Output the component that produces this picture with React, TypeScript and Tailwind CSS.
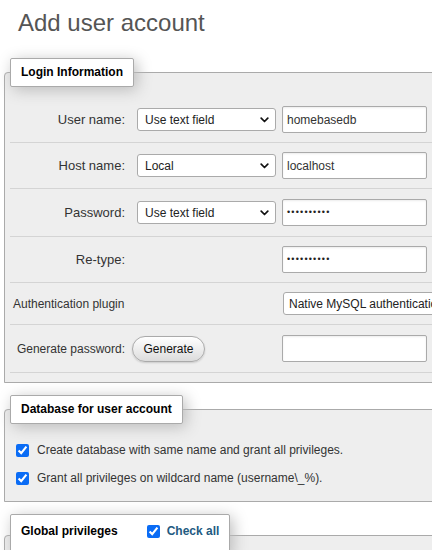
import React from "react";

function Chevron() {
  return (
    <svg width="9" height="6" viewBox="0 0 9 6" className="shrink-0">
      <path d="M1.2 1.2 L4.5 4.5 L7.8 1.2" fill="none" stroke="#111" strokeWidth="1.7" strokeLinecap="round" strokeLinejoin="round" />
    </svg>
  );
}

function FakeSelect({ text }: { text: string }) {
  return (
    <div className="flex items-center justify-between h-[23px] w-[139px] bg-white border border-[#aaa] rounded-[3px] pl-[7px] pr-[6px] text-[12px] text-[#222] shrink-0">
      <span>{text}</span>
      <Chevron />
    </div>
  );
}

function FakeInput({ text, password }: { text?: string; password?: boolean }) {
  return (
    <div className="flex items-center h-[27px] w-[145px] bg-white border border-[#aaa] rounded-[2px] pl-[4px] text-[12px] text-[#333] shadow-[inset_0_1px_2px_rgba(0,0,0,0.08)] shrink-0">
      {password ? <span className="text-[9px] tracking-[1.2px] text-[#222]">••••••••••</span> : <span>{text}</span>}
    </div>
  );
}

function Label({ children, small }: { children: React.ReactNode; small?: boolean }) {
  return (
    <div className={small ? "w-[115px] text-right text-[12px] text-[#333] whitespace-nowrap shrink-0" : "w-[115px] text-right text-[13px] text-[#333] whitespace-nowrap shrink-0"}>
      {children}
    </div>
  );
}

export default function App() {
  return (
    <div className="w-[432px] h-[550px] overflow-hidden bg-white font-['Liberation_Sans',Arial,sans-serif] text-[#333]">
      <h2 className="pt-[8px] pl-[18px] text-[24px] leading-[29px] text-[#555]">Add user account</h2>

      <fieldset className="mt-[21px] ml-[4px] w-[470px] border border-[#aaa] rounded-tl-[4px] bg-[#eee] px-[5px] pt-[10px] pb-[9px]">
        <legend className="bg-white border border-[#aaa] rounded-[2px] px-[10px] py-[5px] text-[12px] font-bold leading-[17px] text-black shadow-[3px_3px_15px_#bbb]">
          Login Information
        </legend>

        <div className="flex items-center h-[46px] border-b border-[#d4d4d4]">
          <Label>User name:</Label>
          <div className="ml-[12px]"><FakeSelect text="Use text field" /></div>
          <div className="ml-[6px]"><FakeInput text="homebasedb" /></div>
        </div>
        <div className="flex items-center h-[46px] border-b border-[#d4d4d4]">
          <Label>Host name:</Label>
          <div className="ml-[12px]"><FakeSelect text="Local" /></div>
          <div className="ml-[6px]"><FakeInput text="localhost" /></div>
        </div>
        <div className="flex items-center h-[48px] border-b border-[#d4d4d4]">
          <Label>Password:</Label>
          <div className="ml-[12px]"><FakeSelect text="Use text field" /></div>
          <div className="ml-[6px]"><FakeInput password /></div>
        </div>
        <div className="flex items-center h-[46px] border-b border-[#d4d4d4]">
          <Label>Re-type:</Label>
          <div className="ml-[157px]"><FakeInput password /></div>
        </div>
        <div className="flex items-center h-[42px] border-b border-[#d4d4d4]">
          <div className="w-[273px] pl-[3px] text-[12px] text-[#333] shrink-0">Authentication plugin</div>
          <div className="flex items-center h-[23px] w-[200px] bg-white border border-[#aaa] rounded-[3px] pl-[5px] text-[12px] text-[#222] whitespace-nowrap overflow-hidden shrink-0">
            Native MySQL authentication
          </div>
        </div>
        <div className="flex items-center h-[48px] border-b border-[#d4d4d4]">
          <Label small>Generate password:</Label>
          <div className="ml-[7px] flex items-center justify-center h-[26px] w-[73px] rounded-full border border-[#aaa] bg-gradient-to-b from-white to-[#dcdcdc] text-[12px] text-[#111] shadow-[0_1px_2px_rgba(0,0,0,0.15)] shrink-0">
            Generate
          </div>
          <div className="ml-[77px]"><FakeInput text="" /></div>
        </div>
      </fieldset>

      <fieldset className="mt-[12px] ml-[4px] w-[470px] border border-[#aaa] rounded-tl-[4px] bg-[#eee] px-[5px] pt-[12px] pb-[9px]">
        <legend className="bg-white border border-[#aaa] rounded-[2px] px-[10px] py-[5px] text-[12px] font-bold leading-[17px] text-black shadow-[3px_3px_15px_#bbb]">
          Database for user account
        </legend>
        <div className="flex items-center h-[28px] pl-[6px]">
          <input type="checkbox" defaultChecked className="w-[13px] h-[13px] accent-[#0a6cf5] shrink-0" />
          <span className="ml-[8px] text-[12px] text-[#333]">Create database with same name and grant all privileges.</span>
        </div>
        <div className="flex items-center h-[28px] pl-[6px]">
          <input type="checkbox" defaultChecked className="w-[13px] h-[13px] accent-[#0a6cf5] shrink-0" />
          <span className="ml-[8px] text-[12px] text-[#333]">Grant all privileges on wildcard name (username\_%).</span>
        </div>
      </fieldset>

      <fieldset className="mt-[12px] ml-[4px] w-[470px] border border-[#aaa] rounded-tl-[4px] bg-[#eee] px-[5px] pt-[12px] pb-[7px]">
        <legend className="bg-white border border-[#aaa] rounded-[2px] px-[10px] pt-[7px] pb-[15px] text-[12px] font-bold leading-[18px] text-black shadow-[3px_3px_15px_#bbb]">
          <div className="flex items-center h-[18px]">
            <span>Global privileges</span>
            <input type="checkbox" defaultChecked className="ml-[29px] w-[13px] h-[13px] accent-[#0a6cf5] shrink-0" />
            <span className="ml-[7px] text-[#235a81]">Check all</span>
          </div>
        </legend>
        <div className="h-[40px]" />
      </fieldset>
    </div>
  );
}
